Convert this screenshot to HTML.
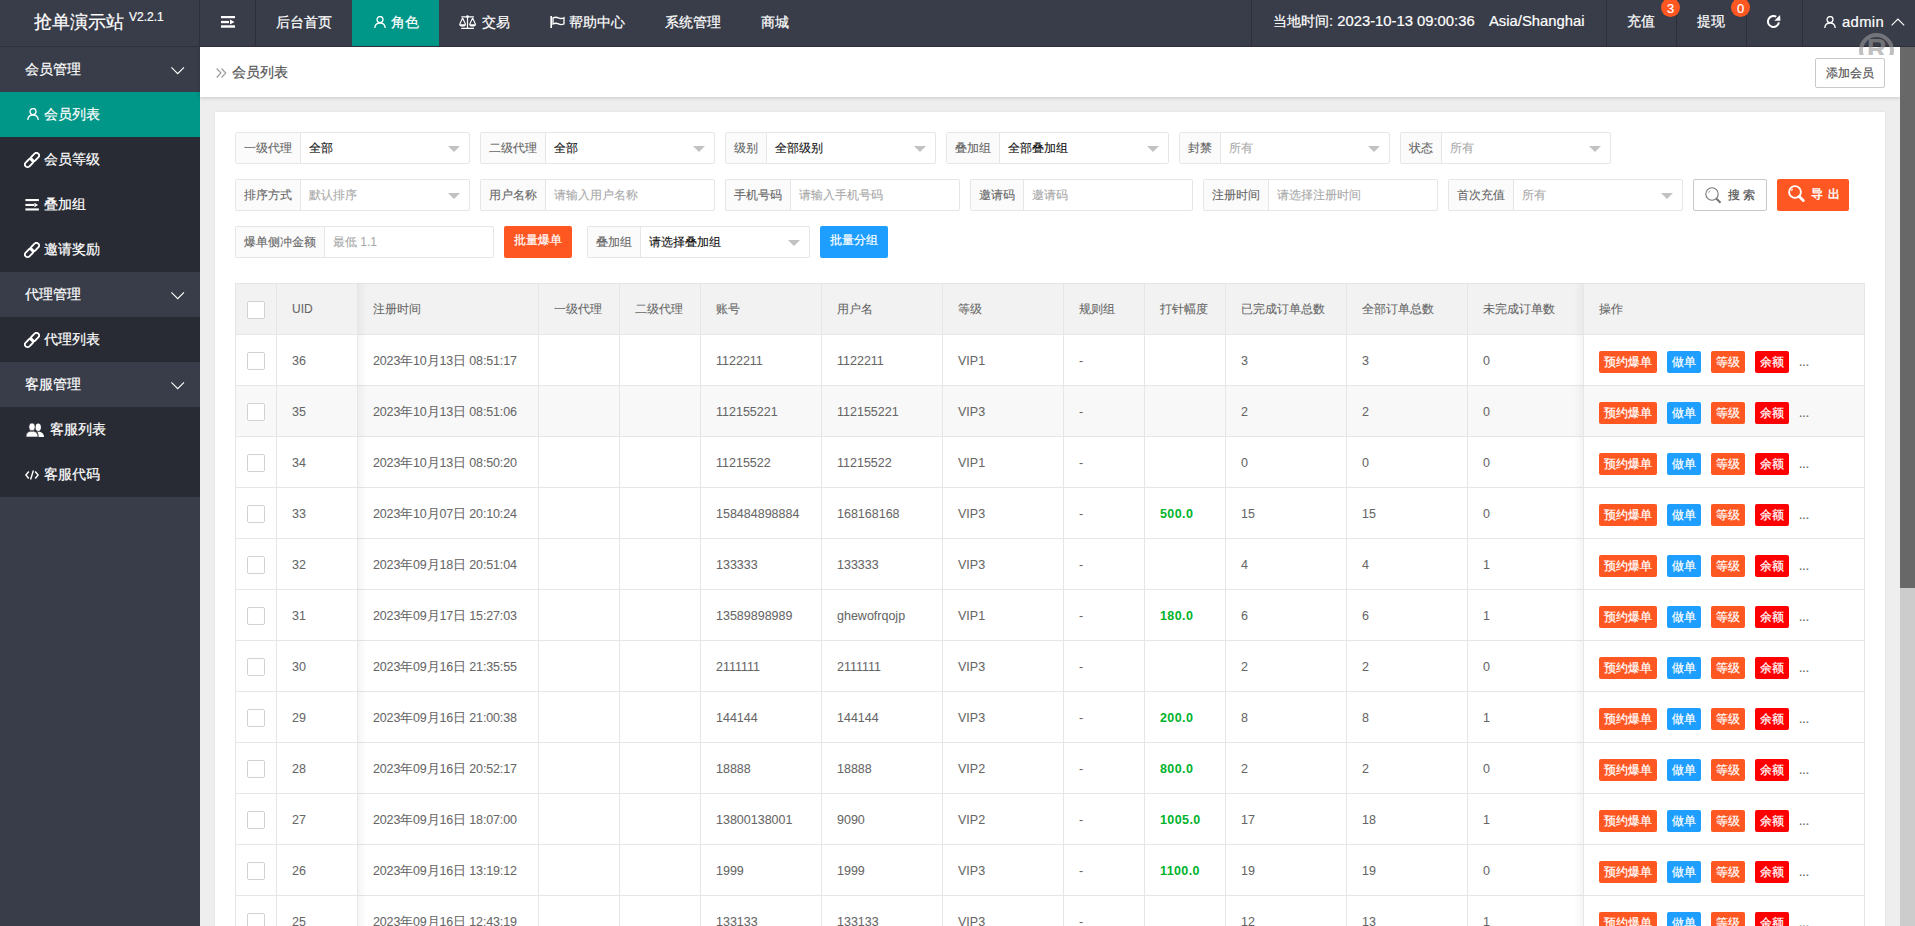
<!DOCTYPE html>
<html><head><meta charset="utf-8">
<style>
*{margin:0;padding:0;box-sizing:border-box}
html,body{width:1915px;height:926px;overflow:hidden}
body{font-family:"Liberation Sans",sans-serif;font-size:14px;color:#666;background:#eeeeee;position:relative}
svg{display:block}
.hdr{position:absolute;left:0;top:0;width:1915px;height:47px;background:#393d49;border-bottom:1px solid #2e313a}
.logo{position:absolute;left:0;top:0;width:200px;height:46px;border-right:1px solid #2e313a;color:#fff}
.logo .t{position:absolute;left:34px;top:10px;font-size:18px;line-height:24px}
.logo .v{position:absolute;left:129px;top:9px;font-size:12px;line-height:16px}
.nav{position:absolute;left:200px;top:0;height:46px;display:flex;color:#fff}
.nav .it{height:46px;line-height:20px;padding:0 20px 3px;white-space:nowrap;position:relative;display:flex;align-items:center}
.nav .it.on{background:#009688}
.sep{position:absolute;top:0;width:1px;height:46px;background:#2d3039}
.rt{position:absolute;top:-2px;height:46px;color:#fff;line-height:46px;white-space:nowrap}
.badge{position:absolute;z-index:2;top:-2px;width:19px;height:19px;border-radius:50%;background:#ff5722;color:#fff;font-size:13px;line-height:21px;text-align:center}
.side{position:absolute;left:0;top:47px;width:200px;height:879px;background:#393d49}
.side .g{height:45px;line-height:45px;color:#fff;padding-left:25px;position:relative}
.side .c{height:45px;line-height:45px;color:#fff;padding-left:25px;background:#282b33;position:relative}
.side .c.on{background:#009688}
.side .c svg{position:absolute}
.side .c span{position:absolute;left:44px;top:0}
.chev{position:absolute;left:171px;top:20px}
.crumb{position:absolute;left:200px;top:47px;width:1700px;height:50px;background:#fff;box-shadow:0 1px 4px rgba(0,0,0,.16)}
.crumb .tx{position:absolute;left:32px;top:0;line-height:50px;font-size:14px;color:#555}
.btn-add{position:absolute;left:1615px;top:11px;width:70px;height:30px;border:1px solid #c9c9c9;border-radius:2px;background:#fff;font-size:12px;color:#555;line-height:28px;text-align:center}
.card{position:absolute;left:215px;top:112px;width:1670px;height:900px;background:#fff;box-shadow:0 0 3px rgba(0,0,0,.07)}
.scroll{position:absolute;left:1900px;top:47px;width:15px;height:879px;background:#cccccc}
.thumb{position:absolute;left:1900px;top:47px;width:15px;height:541px;background:#686868}
.wm{position:absolute;left:1858px;top:32px;width:37px;height:23px;overflow:hidden}.wm i{position:absolute;left:1px;top:1px;width:35px;height:35px;border-radius:50%;border:4.2px solid rgba(152,152,152,.61)}.wm b{position:absolute;left:9px;top:2px;font-size:27px;line-height:30px;color:rgba(152,152,152,.61);font-weight:bold}
.fi{-webkit-text-stroke:0.1px currentColor;position:absolute;height:32px;border:1px solid #e6e6e6;border-radius:2px;background:#fff;display:flex}
.fi .lb{height:30px;line-height:30px;padding:0 8px;background:#fbfbfb;border-right:1px solid #e6e6e6;font-size:12px;color:#666;white-space:nowrap}
.fi .iv{flex:1;height:30px;line-height:30px;padding-left:8px;font-size:12px;color:#111;position:relative;white-space:nowrap}
.fi .iv.ph{color:#a9a9a9}
.fi .tri{position:absolute;right:9px;top:13px;width:0;height:0;border-left:6px solid transparent;border-right:6px solid transparent;border-top:6px solid #c2c2c2}
.bt{position:absolute;height:32px;line-height:30px;border-radius:2px;color:#fff;font-size:12px;text-align:center;white-space:nowrap}
.tb{position:absolute;left:0;top:0}
.thbg{position:absolute;left:235px;width:1630px;background:#f2f2f2}
.tr{position:absolute;left:235px;width:1630px;height:51px;background:#fff}
.tr.hov{background:#f8f8f8}
.hl{position:absolute;left:235px;width:1630px;height:1px;background:#e6e6e6}
.vl{position:absolute;top:283px;width:1px;height:700px;background:#e6e6e6}
.shl{position:absolute;left:358px;top:283px;width:9px;height:700px;background:linear-gradient(to right,rgba(0,0,0,.04),rgba(0,0,0,0))}
.shr{position:absolute;left:1574px;top:283px;width:9px;height:700px;background:linear-gradient(to left,rgba(0,0,0,.04),rgba(0,0,0,0))}
.th{-webkit-text-stroke:0.08px currentColor;position:absolute;height:51px;line-height:53px;font-size:12px;color:#666;white-space:nowrap}
.td{-webkit-text-stroke:0.05px currentColor;position:absolute;height:51px;line-height:54px;font-size:12.5px;color:#666;white-space:nowrap}
.td.g{color:#00b32c;font-weight:bold;letter-spacing:0.4px;-webkit-text-stroke:0}
.cb{position:absolute;left:247px;width:18px;height:18px;border:1px solid #d2d2d2;border-radius:2px;background:#fff}
.ab{position:absolute;width:34px;height:22px;line-height:22px;font-size:12px;color:#fff;text-align:center;border-radius:2px;white-space:nowrap}
.ab.o{background:#ff5722}.ab.b{background:#1e9fff}.ab.r{background:#ff0000}
.dots{position:absolute;left:1799px;height:51px;line-height:56px;font-size:12px;color:#666}

.td.dt{letter-spacing:-0.15px}
.la{font-size:14.8px}
body{-webkit-text-stroke:0.2px currentColor}

</style></head><body>
<div class="hdr"></div>
<div class="logo"><span class="t">抢单演示站</span><span class="v">V2.2.1</span></div>
<div class="nav">
  <div class="it" style="padding:0 20px 3px 21px;width:56px"><svg width="14" height="12" viewBox="0 0 14 12"><rect x="0" y="0" width="14" height="2.2" fill="#fff"/><rect x="0" y="4.9" width="8" height="2.3" fill="#fff"/><path d="M9 3.6 L13.5 6.05 L9 8.5Z" fill="#fff"/><rect x="0" y="9.3" width="14" height="2.4" fill="#fff"/></svg></div>
  <div class="it">后台首页</div>
  <div class="it on"><svg width="12" height="12" viewBox="0 0 12 12" style="margin-left:2px;margin-right:5px"><circle cx="6" cy="3.6" r="3" fill="none" stroke="#fff" stroke-width="1.3"/><path d="M0.8 12 C1 8 3.2 7 6 7 C8.8 7 11 8 11.2 12" fill="none" stroke="#fff" stroke-width="1.3"/></svg>角色</div>
  <div class="it"><svg width="18" height="14" viewBox="0 0 18 14" style="margin-right:5px"><path d="M2.3 1.8 H14.9 M8.5 1.5 V13.2 M2.3 13.3 H14.9" stroke="#fff" stroke-width="1.2" fill="none"/><circle cx="8.5" cy="1.6" r="1.3" fill="#fff"/><path d="M3.6 3 L0.6 9.6 M3.6 3 L6.6 9.6 M13.6 3 L10.6 9.6 M13.6 3 L16.6 9.6" fill="none" stroke="#fff" stroke-width="1.1"/><path d="M0 9.2 H7.2 Q6.8 11.6 3.6 11.6 Q0.4 11.6 0 9.2Z M10 9.2 H17.2 Q16.8 11.6 13.6 11.6 Q10.4 11.6 10 9.2Z" fill="#fff"/></svg>交易</div>
  <div class="it"><svg width="15" height="12" viewBox="0 0 15 12" style="margin-right:4px"><path d="M1.2 0 V12" stroke="#fff" stroke-width="1.7"/><path d="M3 1.9 Q5.8 0.6 8.5 1.9 T14 1.7 V7.9 Q11.2 9.3 8.5 7.9 T3 8 Z" fill="none" stroke="#fff" stroke-width="1.3"/></svg>帮助中心</div>
  <div class="it">系统管理</div>
  <div class="it">商城</div>
</div>
<div class="sep" style="left:255px"></div>
<div class="sep" style="left:1251px"></div>
<div class="rt" style="left:1273px">当地时间<span class="la">: 2023-10-13 09:00:36</span></div><div class="rt" style="left:1489px"><span class="la">Asia/Shanghai</span></div>
<div class="sep" style="left:1606px"></div>
<div class="rt" style="left:1627px">充值</div>
<div class="badge" style="left:1661px">3</div>
<div class="sep" style="left:1676px"></div>
<div class="rt" style="left:1697px">提现</div>
<div class="badge" style="left:1731px">0</div>
<div class="sep" style="left:1746px"></div>
<svg style="position:absolute;left:1767px;top:15px" width="14" height="14" viewBox="0 0 14 14"><path d="M11.9 7.45 A5.5 5.5 0 1 1 9.25 1.74" fill="none" stroke="#fff" stroke-width="2"/><path d="M13.1 0 L7.3 5.8 L13.4 5.8Z" fill="#fff"/></svg>
<div class="sep" style="left:1802px"></div>
<svg style="position:absolute;left:1824px;top:16px" width="12" height="12" viewBox="0 0 12 12"><circle cx="6" cy="3.6" r="3" fill="none" stroke="#fff" stroke-width="1.3"/><path d="M0.8 12 C1 8 3.2 7 6 7 C8.8 7 11 8 11.2 12" fill="none" stroke="#fff" stroke-width="1.3"/></svg>
<div class="rt" style="left:1842px;top:-1px"><span class="la" style="letter-spacing:0.35px">admin</span></div>
<svg style="position:absolute;left:1891px;top:18px" width="14" height="8" viewBox="0 0 14 8"><path d="M0.6 7.4 L6.9 1.1 L13.2 7.4" fill="none" stroke="#fff" stroke-width="1.15"/></svg>
<div class="side">
  <div class="g">会员管理<svg class="chev" width="14" height="8" viewBox="0 0 14 8"><path d="M0.4 0.4 L6.7 6.6 L13 0.4" fill="none" stroke="#fff" stroke-width="1.15"/></svg></div>
  <div class="c on"><svg style="left:27px;top:16px" width="12" height="12" viewBox="0 0 12 12"><circle cx="6" cy="3.6" r="3" fill="none" stroke="#fff" stroke-width="1.3"/><path d="M0.8 12 C1 8 3.2 7 6 7 C8.8 7 11 8 11.2 12" fill="none" stroke="#fff" stroke-width="1.3"/></svg><span>会员列表</span></div>
  <div class="c"><svg style="left:24px;top:15px" width="16" height="16" viewBox="0 0 16 16"><g transform="rotate(-45 8 8)"><rect x="-0.9" y="5.35" width="9.6" height="5.3" rx="2.65" fill="none" stroke="#fff" stroke-width="1.8"/><rect x="7.3" y="5.35" width="9.6" height="5.3" rx="2.65" fill="none" stroke="#fff" stroke-width="1.8"/></g></svg><span>会员等级</span></div>
  <div class="c"><svg style="left:25px;top:17px" width="14" height="12" viewBox="0 0 14 12"><rect x="0.4" y="0" width="13.5" height="2.1" fill="#fff"/><rect x="0.4" y="4.9" width="8.6" height="2.1" fill="#fff"/><path d="M9.4 3.7 L13.1 5.95 L9.4 8.2Z" fill="#fff"/><rect x="0.4" y="9.4" width="13.5" height="2.1" fill="#fff"/></svg><span style="left:44px">叠加组</span></div>
  <div class="c"><svg style="left:24px;top:15px" width="16" height="16" viewBox="0 0 16 16"><g transform="rotate(-45 8 8)"><rect x="-0.9" y="5.35" width="9.6" height="5.3" rx="2.65" fill="none" stroke="#fff" stroke-width="1.8"/><rect x="7.3" y="5.35" width="9.6" height="5.3" rx="2.65" fill="none" stroke="#fff" stroke-width="1.8"/></g></svg><span>邀请奖励</span></div>
  <div class="g">代理管理<svg class="chev" width="14" height="8" viewBox="0 0 14 8"><path d="M0.4 0.4 L6.7 6.6 L13 0.4" fill="none" stroke="#fff" stroke-width="1.15"/></svg></div>
  <div class="c"><svg style="left:24px;top:15px" width="16" height="16" viewBox="0 0 16 16"><g transform="rotate(-45 8 8)"><rect x="-0.9" y="5.35" width="9.6" height="5.3" rx="2.65" fill="none" stroke="#fff" stroke-width="1.8"/><rect x="7.3" y="5.35" width="9.6" height="5.3" rx="2.65" fill="none" stroke="#fff" stroke-width="1.8"/></g></svg><span>代理列表</span></div>
  <div class="g">客服管理<svg class="chev" width="14" height="8" viewBox="0 0 14 8"><path d="M0.4 0.4 L6.7 6.6 L13 0.4" fill="none" stroke="#fff" stroke-width="1.15"/></svg></div>
  <div class="c"><svg style="left:26px;top:16px" width="18" height="14" viewBox="0 0 18 14"><ellipse cx="12.2" cy="4.3" rx="2.7" ry="3.8" fill="#fff"/><path d="M11 8.6 C15 8.8 18 10 18 14 H12.5 C12.5 11 12 9.5 11 8.6Z" fill="#fff"/><ellipse cx="6" cy="3.9" rx="3.1" ry="3.9" fill="#fff" stroke="#282b33" stroke-width="0.6"/><path d="M0 14 C0 10.2 2 8.8 4.5 8.3 L7.5 8.3 C10 8.8 12 10.2 12 14 Z" fill="#fff" stroke="#282b33" stroke-width="0.6"/></svg><span style="left:50px">客服列表</span></div>
  <div class="c"><svg style="left:25px;top:18px" width="14" height="10" viewBox="0 0 14 10"><path d="M3.8 1.5 L0.9 5 L3.8 8.5 M10.2 1.5 L13.1 5 L10.2 8.5 M8.4 0.5 L5.6 9.5" fill="none" stroke="#fff" stroke-width="1.4"/></svg><span>客服代码</span></div>
</div>
<div class="crumb">
  <svg style="position:absolute;left:16px;top:21px" width="11" height="10" viewBox="0 0 11 10"><path d="M0.7 0.5 L5 5 L0.7 9.5 M5.5 0.5 L9.8 5 L5.5 9.5" fill="none" stroke="#999" stroke-width="1.1"/></svg>
  <span class="tx">会员列表</span>
  <div class="btn-add">添加会员</div>
</div>
<div class="wm"><i></i><b>R</b></div>
<div class="card"></div>

<div class="fi" style="left:235px;top:132px;width:235px"><div class="lb">一级代理</div><div class="iv">全部<i class="tri"></i></div></div>
<div class="fi" style="left:480px;top:132px;width:235px"><div class="lb">二级代理</div><div class="iv">全部<i class="tri"></i></div></div>
<div class="fi" style="left:725px;top:132px;width:211px"><div class="lb">级别</div><div class="iv">全部级别<i class="tri"></i></div></div>
<div class="fi" style="left:946px;top:132px;width:223px"><div class="lb">叠加组</div><div class="iv">全部叠加组<i class="tri"></i></div></div>
<div class="fi" style="left:1179px;top:132px;width:211px"><div class="lb">封禁</div><div class="iv ph">所有<i class="tri"></i></div></div>
<div class="fi" style="left:1400px;top:132px;width:211px"><div class="lb">状态</div><div class="iv ph">所有<i class="tri"></i></div></div>

<div class="fi" style="left:235px;top:179px;width:235px"><div class="lb">排序方式</div><div class="iv ph">默认排序<i class="tri"></i></div></div>
<div class="fi" style="left:480px;top:179px;width:235px"><div class="lb">用户名称</div><div class="iv ph">请输入用户名称</div></div>
<div class="fi" style="left:725px;top:179px;width:235px"><div class="lb">手机号码</div><div class="iv ph">请输入手机号码</div></div>
<div class="fi" style="left:970px;top:179px;width:223px"><div class="lb">邀请码</div><div class="iv ph">邀请码</div></div>
<div class="fi" style="left:1203px;top:179px;width:235px"><div class="lb">注册时间</div><div class="iv ph">请选择注册时间</div></div>
<div class="fi" style="left:1448px;top:179px;width:235px"><div class="lb">首次充值</div><div class="iv ph">所有<i class="tri"></i></div></div>
<div class="bt" style="left:1693px;top:179px;width:74px;border:1px solid #c9c9c9;background:#fff;color:#555"><svg style="position:absolute;left:11px;top:7px" width="17" height="17" viewBox="0 0 17 17"><circle cx="7" cy="7" r="6.2" fill="none" stroke="#777" stroke-width="1.1"/><path d="M3.8 5.5 A3.5 3.5 0 0 1 5 3.8" fill="none" stroke="#777" stroke-width="1"/><path d="M11.2 11.5 L15.5 15.8" stroke="#777" stroke-width="2.2"/></svg><span style="position:absolute;left:34px;top:0;letter-spacing:3px">搜索</span></div>
<div class="bt" style="left:1777px;top:179px;width:72px;background:#ff5722"><svg style="position:absolute;left:11px;top:6px" width="17" height="17" viewBox="0 0 17 17"><circle cx="7" cy="7" r="5.9" fill="none" stroke="#fff" stroke-width="1.9"/><path d="M3.6 6 A3.5 3.5 0 0 1 4.6 3.9" fill="none" stroke="#fff" stroke-width="1.1"/><path d="M11.2 11.5 L15.3 15.6" stroke="#fff" stroke-width="2.8" stroke-linecap="round"/></svg><span style="position:absolute;left:34px;top:0px;letter-spacing:4.5px;-webkit-text-stroke:0.45px #fff">导出</span></div>

<div class="fi" style="left:235px;top:226px;width:259px"><div class="lb">爆单侧冲金额</div><div class="iv ph">最低 1.1</div></div>
<div class="bt" style="left:504px;top:226px;width:68px;background:#ff5722;line-height:28px">批量爆单</div>
<div class="fi" style="left:587px;top:226px;width:223px"><div class="lb">叠加组</div><div class="iv">请选择叠加组<i class="tri"></i></div></div>
<div class="bt" style="left:820px;top:226px;width:68px;background:#1e9fff;line-height:28px">批量分组</div>
<div class="tb">
<div class="thbg" style="top:283px;height:51px"></div>
<div class="tr" style="top:334px"></div>
<div class="tr hov" style="top:385px"></div>
<div class="tr" style="top:436px"></div>
<div class="tr" style="top:487px"></div>
<div class="tr" style="top:538px"></div>
<div class="tr" style="top:589px"></div>
<div class="tr" style="top:640px"></div>
<div class="tr" style="top:691px"></div>
<div class="tr" style="top:742px"></div>
<div class="tr" style="top:793px"></div>
<div class="tr" style="top:844px"></div>
<div class="tr" style="top:895px"></div>
<div class="hl" style="top:283px"></div>
<div class="hl" style="top:334px"></div>
<div class="hl" style="top:385px"></div>
<div class="hl" style="top:436px"></div>
<div class="hl" style="top:487px"></div>
<div class="hl" style="top:538px"></div>
<div class="hl" style="top:589px"></div>
<div class="hl" style="top:640px"></div>
<div class="hl" style="top:691px"></div>
<div class="hl" style="top:742px"></div>
<div class="hl" style="top:793px"></div>
<div class="hl" style="top:844px"></div>
<div class="hl" style="top:895px"></div>
<div class="hl" style="top:946px"></div>
<div class="vl" style="left:235px"></div>
<div class="vl" style="left:276px"></div>
<div class="vl" style="left:357px"></div>
<div class="vl" style="left:538px"></div>
<div class="vl" style="left:619px"></div>
<div class="vl" style="left:700px"></div>
<div class="vl" style="left:821px"></div>
<div class="vl" style="left:942px"></div>
<div class="vl" style="left:1063px"></div>
<div class="vl" style="left:1144px"></div>
<div class="vl" style="left:1225px"></div>
<div class="vl" style="left:1346px"></div>
<div class="vl" style="left:1467px"></div>
<div class="vl" style="left:1583px"></div>
<div class="vl" style="left:1864px"></div>
<div class="shl"></div><div class="shr"></div>
<div class="cb" style="top:301px"></div>
<div class="th" style="left:292px;top:283px">UID</div>
<div class="th" style="left:373px;top:283px">注册时间</div>
<div class="th" style="left:554px;top:283px">一级代理</div>
<div class="th" style="left:635px;top:283px">二级代理</div>
<div class="th" style="left:716px;top:283px">账号</div>
<div class="th" style="left:837px;top:283px">用户名</div>
<div class="th" style="left:958px;top:283px">等级</div>
<div class="th" style="left:1079px;top:283px">规则组</div>
<div class="th" style="left:1160px;top:283px">打针幅度</div>
<div class="th" style="left:1241px;top:283px">已完成订单总数</div>
<div class="th" style="left:1362px;top:283px">全部订单总数</div>
<div class="th" style="left:1483px;top:283px">未完成订单数</div>
<div class="th" style="left:1599px;top:283px">操作</div>
<div class="cb" style="top:352px"></div>
<div class="td" style="left:292px;top:334px">36</div>
<div class="td dt" style="left:373px;top:334px">2023年10月13日 08:51:17</div>
<div class="td" style="left:716px;top:334px">1122211</div>
<div class="td" style="left:837px;top:334px">1122211</div>
<div class="td" style="left:958px;top:334px">VIP1</div>
<div class="td" style="left:1079px;top:334px">-</div>
<div class="td" style="left:1241px;top:334px">3</div>
<div class="td" style="left:1362px;top:334px">3</div>
<div class="td" style="left:1483px;top:334px">0</div>
<div class="ab o" style="left:1599px;top:351px;width:58px">预约爆单</div>
<div class="ab b" style="left:1667px;top:351px">做单</div>
<div class="ab o" style="left:1711px;top:351px">等级</div>
<div class="ab r" style="left:1755px;top:351px">余额</div>
<div class="dots" style="top:334px">...</div>
<div class="cb" style="top:403px"></div>
<div class="td" style="left:292px;top:385px">35</div>
<div class="td dt" style="left:373px;top:385px">2023年10月13日 08:51:06</div>
<div class="td" style="left:716px;top:385px">112155221</div>
<div class="td" style="left:837px;top:385px">112155221</div>
<div class="td" style="left:958px;top:385px">VIP3</div>
<div class="td" style="left:1079px;top:385px">-</div>
<div class="td" style="left:1241px;top:385px">2</div>
<div class="td" style="left:1362px;top:385px">2</div>
<div class="td" style="left:1483px;top:385px">0</div>
<div class="ab o" style="left:1599px;top:402px;width:58px">预约爆单</div>
<div class="ab b" style="left:1667px;top:402px">做单</div>
<div class="ab o" style="left:1711px;top:402px">等级</div>
<div class="ab r" style="left:1755px;top:402px">余额</div>
<div class="dots" style="top:385px">...</div>
<div class="cb" style="top:454px"></div>
<div class="td" style="left:292px;top:436px">34</div>
<div class="td dt" style="left:373px;top:436px">2023年10月13日 08:50:20</div>
<div class="td" style="left:716px;top:436px">11215522</div>
<div class="td" style="left:837px;top:436px">11215522</div>
<div class="td" style="left:958px;top:436px">VIP1</div>
<div class="td" style="left:1079px;top:436px">-</div>
<div class="td" style="left:1241px;top:436px">0</div>
<div class="td" style="left:1362px;top:436px">0</div>
<div class="td" style="left:1483px;top:436px">0</div>
<div class="ab o" style="left:1599px;top:453px;width:58px">预约爆单</div>
<div class="ab b" style="left:1667px;top:453px">做单</div>
<div class="ab o" style="left:1711px;top:453px">等级</div>
<div class="ab r" style="left:1755px;top:453px">余额</div>
<div class="dots" style="top:436px">...</div>
<div class="cb" style="top:505px"></div>
<div class="td" style="left:292px;top:487px">33</div>
<div class="td dt" style="left:373px;top:487px">2023年10月07日 20:10:24</div>
<div class="td" style="left:716px;top:487px">158484898884</div>
<div class="td" style="left:837px;top:487px">168168168</div>
<div class="td" style="left:958px;top:487px">VIP3</div>
<div class="td" style="left:1079px;top:487px">-</div>
<div class="td g" style="left:1160px;top:487px">500.0</div>
<div class="td" style="left:1241px;top:487px">15</div>
<div class="td" style="left:1362px;top:487px">15</div>
<div class="td" style="left:1483px;top:487px">0</div>
<div class="ab o" style="left:1599px;top:504px;width:58px">预约爆单</div>
<div class="ab b" style="left:1667px;top:504px">做单</div>
<div class="ab o" style="left:1711px;top:504px">等级</div>
<div class="ab r" style="left:1755px;top:504px">余额</div>
<div class="dots" style="top:487px">...</div>
<div class="cb" style="top:556px"></div>
<div class="td" style="left:292px;top:538px">32</div>
<div class="td dt" style="left:373px;top:538px">2023年09月18日 20:51:04</div>
<div class="td" style="left:716px;top:538px">133333</div>
<div class="td" style="left:837px;top:538px">133333</div>
<div class="td" style="left:958px;top:538px">VIP3</div>
<div class="td" style="left:1079px;top:538px">-</div>
<div class="td" style="left:1241px;top:538px">4</div>
<div class="td" style="left:1362px;top:538px">4</div>
<div class="td" style="left:1483px;top:538px">1</div>
<div class="ab o" style="left:1599px;top:555px;width:58px">预约爆单</div>
<div class="ab b" style="left:1667px;top:555px">做单</div>
<div class="ab o" style="left:1711px;top:555px">等级</div>
<div class="ab r" style="left:1755px;top:555px">余额</div>
<div class="dots" style="top:538px">...</div>
<div class="cb" style="top:607px"></div>
<div class="td" style="left:292px;top:589px">31</div>
<div class="td dt" style="left:373px;top:589px">2023年09月17日 15:27:03</div>
<div class="td" style="left:716px;top:589px">13589898989</div>
<div class="td" style="left:837px;top:589px">ghewofrqojp</div>
<div class="td" style="left:958px;top:589px">VIP1</div>
<div class="td" style="left:1079px;top:589px">-</div>
<div class="td g" style="left:1160px;top:589px">180.0</div>
<div class="td" style="left:1241px;top:589px">6</div>
<div class="td" style="left:1362px;top:589px">6</div>
<div class="td" style="left:1483px;top:589px">1</div>
<div class="ab o" style="left:1599px;top:606px;width:58px">预约爆单</div>
<div class="ab b" style="left:1667px;top:606px">做单</div>
<div class="ab o" style="left:1711px;top:606px">等级</div>
<div class="ab r" style="left:1755px;top:606px">余额</div>
<div class="dots" style="top:589px">...</div>
<div class="cb" style="top:658px"></div>
<div class="td" style="left:292px;top:640px">30</div>
<div class="td dt" style="left:373px;top:640px">2023年09月16日 21:35:55</div>
<div class="td" style="left:716px;top:640px">2111111</div>
<div class="td" style="left:837px;top:640px">2111111</div>
<div class="td" style="left:958px;top:640px">VIP3</div>
<div class="td" style="left:1079px;top:640px">-</div>
<div class="td" style="left:1241px;top:640px">2</div>
<div class="td" style="left:1362px;top:640px">2</div>
<div class="td" style="left:1483px;top:640px">0</div>
<div class="ab o" style="left:1599px;top:657px;width:58px">预约爆单</div>
<div class="ab b" style="left:1667px;top:657px">做单</div>
<div class="ab o" style="left:1711px;top:657px">等级</div>
<div class="ab r" style="left:1755px;top:657px">余额</div>
<div class="dots" style="top:640px">...</div>
<div class="cb" style="top:709px"></div>
<div class="td" style="left:292px;top:691px">29</div>
<div class="td dt" style="left:373px;top:691px">2023年09月16日 21:00:38</div>
<div class="td" style="left:716px;top:691px">144144</div>
<div class="td" style="left:837px;top:691px">144144</div>
<div class="td" style="left:958px;top:691px">VIP3</div>
<div class="td" style="left:1079px;top:691px">-</div>
<div class="td g" style="left:1160px;top:691px">200.0</div>
<div class="td" style="left:1241px;top:691px">8</div>
<div class="td" style="left:1362px;top:691px">8</div>
<div class="td" style="left:1483px;top:691px">1</div>
<div class="ab o" style="left:1599px;top:708px;width:58px">预约爆单</div>
<div class="ab b" style="left:1667px;top:708px">做单</div>
<div class="ab o" style="left:1711px;top:708px">等级</div>
<div class="ab r" style="left:1755px;top:708px">余额</div>
<div class="dots" style="top:691px">...</div>
<div class="cb" style="top:760px"></div>
<div class="td" style="left:292px;top:742px">28</div>
<div class="td dt" style="left:373px;top:742px">2023年09月16日 20:52:17</div>
<div class="td" style="left:716px;top:742px">18888</div>
<div class="td" style="left:837px;top:742px">18888</div>
<div class="td" style="left:958px;top:742px">VIP2</div>
<div class="td" style="left:1079px;top:742px">-</div>
<div class="td g" style="left:1160px;top:742px">800.0</div>
<div class="td" style="left:1241px;top:742px">2</div>
<div class="td" style="left:1362px;top:742px">2</div>
<div class="td" style="left:1483px;top:742px">0</div>
<div class="ab o" style="left:1599px;top:759px;width:58px">预约爆单</div>
<div class="ab b" style="left:1667px;top:759px">做单</div>
<div class="ab o" style="left:1711px;top:759px">等级</div>
<div class="ab r" style="left:1755px;top:759px">余额</div>
<div class="dots" style="top:742px">...</div>
<div class="cb" style="top:811px"></div>
<div class="td" style="left:292px;top:793px">27</div>
<div class="td dt" style="left:373px;top:793px">2023年09月16日 18:07:00</div>
<div class="td" style="left:716px;top:793px">13800138001</div>
<div class="td" style="left:837px;top:793px">9090</div>
<div class="td" style="left:958px;top:793px">VIP2</div>
<div class="td" style="left:1079px;top:793px">-</div>
<div class="td g" style="left:1160px;top:793px">1005.0</div>
<div class="td" style="left:1241px;top:793px">17</div>
<div class="td" style="left:1362px;top:793px">18</div>
<div class="td" style="left:1483px;top:793px">1</div>
<div class="ab o" style="left:1599px;top:810px;width:58px">预约爆单</div>
<div class="ab b" style="left:1667px;top:810px">做单</div>
<div class="ab o" style="left:1711px;top:810px">等级</div>
<div class="ab r" style="left:1755px;top:810px">余额</div>
<div class="dots" style="top:793px">...</div>
<div class="cb" style="top:862px"></div>
<div class="td" style="left:292px;top:844px">26</div>
<div class="td dt" style="left:373px;top:844px">2023年09月16日 13:19:12</div>
<div class="td" style="left:716px;top:844px">1999</div>
<div class="td" style="left:837px;top:844px">1999</div>
<div class="td" style="left:958px;top:844px">VIP3</div>
<div class="td" style="left:1079px;top:844px">-</div>
<div class="td g" style="left:1160px;top:844px">1100.0</div>
<div class="td" style="left:1241px;top:844px">19</div>
<div class="td" style="left:1362px;top:844px">19</div>
<div class="td" style="left:1483px;top:844px">0</div>
<div class="ab o" style="left:1599px;top:861px;width:58px">预约爆单</div>
<div class="ab b" style="left:1667px;top:861px">做单</div>
<div class="ab o" style="left:1711px;top:861px">等级</div>
<div class="ab r" style="left:1755px;top:861px">余额</div>
<div class="dots" style="top:844px">...</div>
<div class="cb" style="top:913px"></div>
<div class="td" style="left:292px;top:895px">25</div>
<div class="td dt" style="left:373px;top:895px">2023年09月16日 12:43:19</div>
<div class="td" style="left:716px;top:895px">133133</div>
<div class="td" style="left:837px;top:895px">133133</div>
<div class="td" style="left:958px;top:895px">VIP3</div>
<div class="td" style="left:1079px;top:895px">-</div>
<div class="td" style="left:1241px;top:895px">12</div>
<div class="td" style="left:1362px;top:895px">13</div>
<div class="td" style="left:1483px;top:895px">1</div>
<div class="ab o" style="left:1599px;top:912px;width:58px">预约爆单</div>
<div class="ab b" style="left:1667px;top:912px">做单</div>
<div class="ab o" style="left:1711px;top:912px">等级</div>
<div class="ab r" style="left:1755px;top:912px">余额</div>
<div class="dots" style="top:895px">...</div>
</div>
<div class="scroll"></div><div class="thumb"></div>

</body></html>
